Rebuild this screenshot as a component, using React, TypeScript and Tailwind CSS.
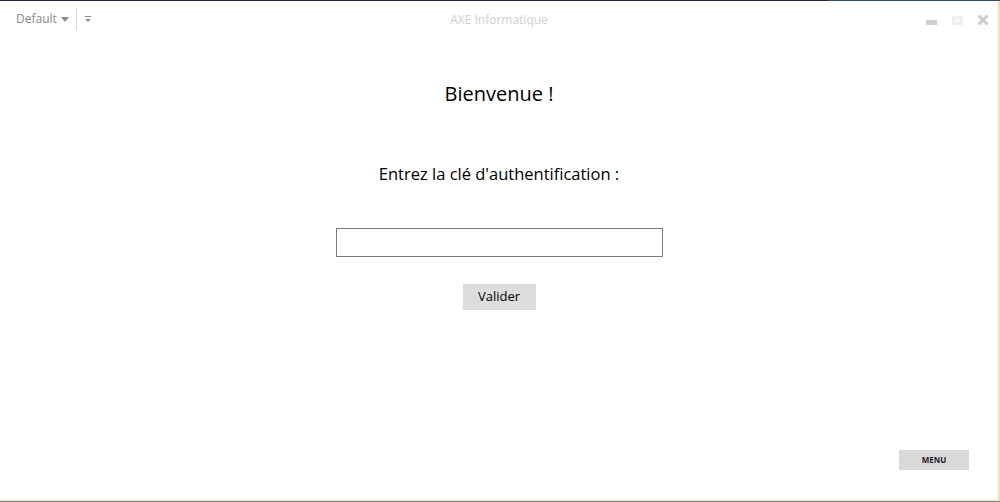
import { } from 'react';

export default function App() {
  return (
    <div className="h-[502px] w-[1000px] flex flex-col bg-white overflow-hidden" style={{ fontFamily: '"Open Sans", "Noto Sans", sans-serif' }}>
      <div className="flex h-px">
        <div className="w-[828px] bg-[#1c2636]" />
        <div className="flex-1 bg-[#3a4a66]" />
      </div>
      <div className="flex flex-1 min-h-0">
        <div className="flex-1 flex flex-col min-w-0">
          {/* title bar */}
          <div className="relative h-[36px] flex items-center">
            <div className="flex items-center pl-[16px] text-[12px] text-[#8a8a8a]">
              <span>Default</span>
              <svg width="8" height="5" viewBox="0 0 8 5" className="ml-[4px]"><path d="M0 0h8L4 5z" fill="#8a8a8a" /></svg>
            </div>
            <div className="ml-[7px] h-[22px] w-px bg-[#dcdcdc]" />
            <svg width="8" height="7" viewBox="0 0 8 7" className="ml-[7px] mt-[1px]">
              <rect x="1" y="0" width="6" height="1" fill="#8a8a8a" />
              <path d="M1 3h6L4 6z" fill="#8a8a8a" />
            </svg>
            <div className="absolute left-0 right-0 top-[10px] text-center text-[12px] text-[#cfcfcf] pointer-events-none">AXE Informatique</div>
            <div className="ml-auto flex items-center pr-[9px] pt-[2px]">
              <div className="w-[11px] h-[5px] bg-[#cfcfcf] mt-[5px]" />
              <div className="ml-[15px] w-[11px] h-[9px] border-[3px] border-[#f0f0f0] bg-[#fafafa]" />
              <svg width="12" height="12" viewBox="0 0 12 12" className="ml-[14px]"><path d="M1.5 1.5l9 9M10.5 1.5l-9 9" stroke="#cdcdcd" strokeWidth="3" /></svg>
            </div>
          </div>
          {/* content */}
          <div className="flex-1 flex flex-col items-center text-black">
            <div className="mt-[43px] text-[20px] leading-[28px]">Bienvenue !</div>
            <div className="mt-[54px] text-[16.5px] leading-[24px]">Entrez la clé d'authentification :</div>
            <input className="mt-[42px] w-[327px] h-[29px] border border-[#7a7a7a] outline-none px-1 text-[14px]" />
            <button className="mt-[27px] w-[73px] h-[26px] bg-[#dddddd] text-[13px] text-black">Valider</button>
            <div className="flex-1" />
            <div className="self-end mr-[29px] mb-[30px]">
              <button className="w-[70px] h-[20px] bg-[#d9d9d9] text-[8px] font-bold text-[#222]">MENU</button>
            </div>
          </div>
        </div>
        <div className="w-[2px] bg-[#f7dfb5]" />
      </div>
      <div className="h-px bg-[#f7dfb5]" />
      <div className="h-px bg-[#8a8a8a]" />
    </div>
  );
}
